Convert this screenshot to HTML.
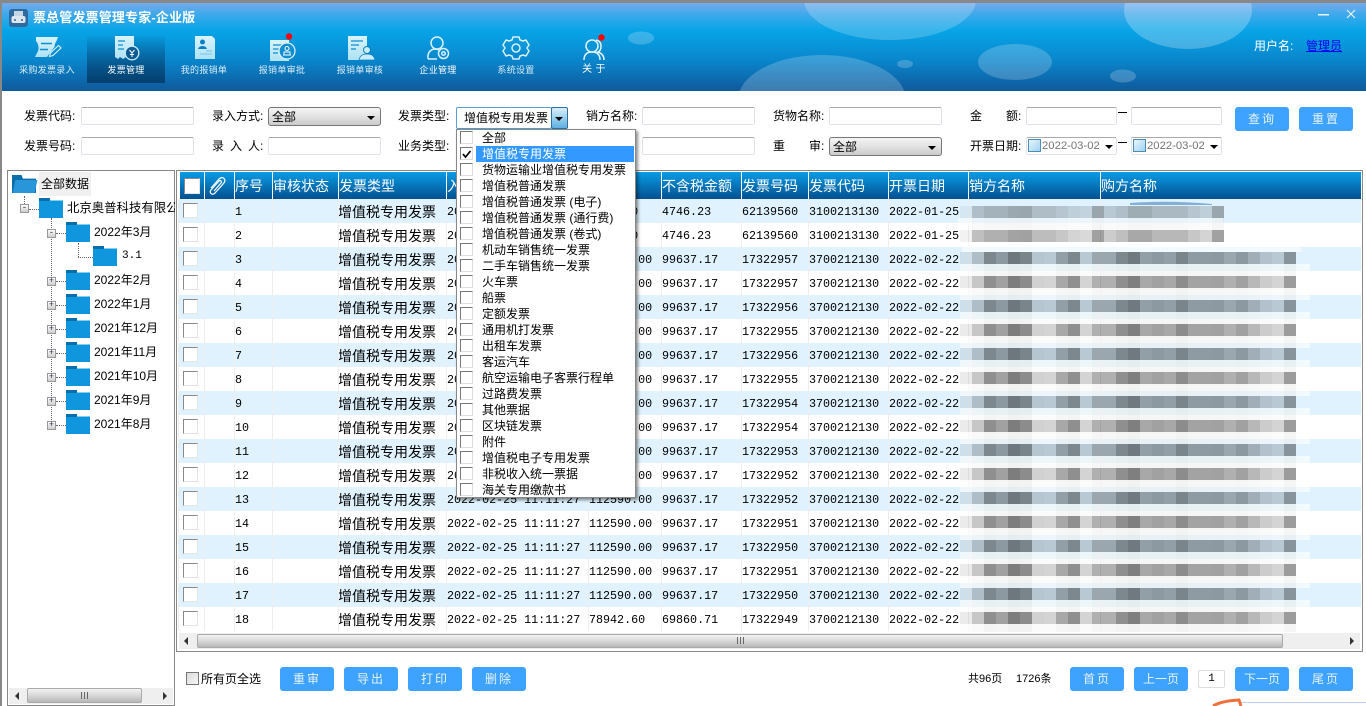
<!DOCTYPE html>
<html lang="zh"><head><meta charset="utf-8"><title>票总管发票管理专家-企业版</title>
<style>
*{box-sizing:border-box}
html,body{margin:0;padding:0;width:1366px;height:706px;overflow:hidden;background:#fff}
body{position:relative;font-family:"Liberation Sans","WenQuanYi Zen Hei","Noto Sans CJK SC",sans-serif;font-size:12px;color:#000}
.a{position:absolute}
.l{position:absolute;font-size:12px;line-height:16px;white-space:nowrap}
.i{position:absolute;height:18px;background:#fff;border:1px solid #dfe3ea;border-top-color:#aaa;border-radius:2px}
.b{position:absolute;height:24px;width:54px;background:#3ea2ff;border-radius:3px;color:#e6f3ff;text-align:center;line-height:24px;font-size:12px;letter-spacing:2px}
.s{position:absolute;height:19px;border:1px solid #777;border-radius:3px;background:linear-gradient(#f4f4f4,#e4e4e4 45%,#cbcbcb);line-height:18px;padding-left:3px;font-size:12px}
.t{position:absolute;width:0;height:0;border-left:4px solid transparent;border-right:4px solid transparent;border-top:4px solid #000}
.n{position:absolute;top:64px;width:78px;text-align:center;font-size:9px;letter-spacing:.3px;line-height:12px;color:#d9edf7;white-space:nowrap}
table{position:absolute;left:178px;top:172px;width:1182px;border-collapse:collapse;table-layout:fixed}
th{height:27px;padding:0;background:linear-gradient(#0a9ce6,#02508f);color:#fff;font-weight:normal;font-size:14px;text-align:left;border-left:1px solid #fff;overflow:hidden;white-space:nowrap}
td{height:24px;padding:2px 0 0 0;border-left:1px solid #eee;font:11.7px/22px "Liberation Mono",monospace;overflow:hidden;white-space:nowrap}
td.z{font:14px/22px "WenQuanYi Zen Hei","Noto Sans CJK SC",sans-serif;text-indent:-1px}
tr:nth-child(odd) td{background:#dff2fe}
tr:nth-child(even) td{background:#fff}
.k{display:block;width:15px;height:15px;margin:-3px 0 0 4px;background:#fff;border:1px solid;border-color:#888 #e4e4e4 #e4e4e4 #888}
.d{position:absolute;left:482px;font-size:12px;line-height:16px;white-space:nowrap}
.c{position:absolute;left:460px;width:13px;height:13px;background:#fff;border:1px solid;border-color:#777 #ddd #ddd #777}
.e{position:absolute;width:9px;height:9px;background:linear-gradient(#fff,#ccc);border:1px solid #999;color:#335;font:9px/7px "Liberation Mono",monospace;text-align:center}
.f{position:absolute;width:24px;height:18px;background:#1096dc;border-top:1px solid #7fd0f5}
.f:before{content:"";position:absolute;left:0;top:-3px;width:11px;height:3px;background:#0b6ea8}
.h{position:absolute;border-top:1px dotted #666}
.v{position:absolute;border-left:1px dotted #666}
.o{position:absolute;font-size:12px;line-height:16px;white-space:nowrap}
.sb{position:absolute;background:#efefef}
.th{position:absolute;background:linear-gradient(#f2f2f2,#d8d8d8 50%,#b8b8b8);border:1px solid #aaa;border-radius:2px}
.gr{position:absolute;width:8px;height:7px;background:repeating-linear-gradient(90deg,#666 0 1px,transparent 1px 3px)}
</style></head><body>

<!-- header -->
<div class="a" style="left:0;top:0;width:1366px;height:91px;background:linear-gradient(#72abec 4px,#3fa9ea 14px,#07a5e8 30px,#0a86cc 60px,#0f5a9c 91px);overflow:hidden">
<svg width="1366" height="91" style="position:absolute;left:0;top:0"><g fill="#fff">
<ellipse cx="890" cy="0" rx="86" ry="40" opacity=".2"/>
<ellipse cx="822" cy="100" rx="84" ry="45" opacity=".2"/>
<ellipse cx="641" cy="38" rx="13" ry="6.5" opacity=".2"/>
<ellipse cx="905" cy="64" rx="8" ry="4" opacity=".2"/>
<ellipse cx="1188" cy="10" rx="64" ry="39" opacity=".25"/>
<ellipse cx="1015" cy="62" rx="37" ry="18" opacity=".2"/>
<ellipse cx="1123" cy="76" rx="13" ry="6.5" opacity=".2"/></g>
<rect x="1318" y="14" width="11" height="1.5" fill="#e8f4fb"/>
<path d="M1347 10l8 8M1355 10l-8 8" stroke="#e8f4fb" stroke-width="1.2"/>
</svg>
</div>
<div class="a" style="left:0;top:0;width:1366px;height:3px;background:#888"></div>
<div class="a" style="left:0;top:3px;width:2px;height:703px;background:#888"></div>
<div class="a" style="left:87px;top:34px;width:78px;height:49px;background:linear-gradient(rgba(2,60,110,0),#02416f)"></div>

<svg class="a" style="left:0;top:0" width="1366" height="91">
<defs><linearGradient id="g" x1="0" y1="0" x2="0" y2="1"><stop offset="0" stop-color="#d9f3fb"/><stop offset="1" stop-color="#aee2f5"/></linearGradient></defs>
<!-- app logo -->
<rect x="9" y="9" width="19" height="18" rx="3" fill="#2e6a9e"/>
<path d="M14 11h9v5h-9z" fill="#c7d6e4"/><rect x="11.500" y="16" width="14" height="7" rx="2" fill="#dbe6ef"/><circle cx="15" cy="20" r="1" fill="#2e6a9e"/><circle cx="22" cy="20" r="1" fill="#2e6a9e"/>
<!-- 1 ticket -->
<path d="M36 37H58L56.500 41Q54.500 44 54.500 47L47 57H35L37 53Q39 50 38.500 47Q38 43 36 41Z" fill="url(#g)"/>
<path d="M41 43.500h11M40 49.500h8" stroke="#0b8fd3" stroke-width="1.500"/>
<path d="M49.500 56.500l1-3.500 8-7.500 2.500 2.500-8 7.500z" fill="#0a90d6" stroke="#d9f3fb" stroke-width="1.100"/>
<!-- 2 receipt -->
<path d="M115 36h19v14h-5v9l-3-2-3 2-3-2-2 2-3-2z" fill="url(#g)"/>
<path d="M118 41h7M118 45h5M118 49h6" stroke="#0b8fd3" stroke-width="1.300"/>
<circle cx="132" cy="53" r="6.800" fill="#0b5c93" stroke="#c9edf8" stroke-width="1.300"/>
<path d="M129.500 50l2.500 3 2.500-3M132 53v4M130 54.500h4" stroke="#fff" stroke-width="1" fill="none"/>
<!-- 3 doc person -->
<path d="M195 36h17l3 3v20h-20z" fill="url(#g)"/>
<circle cx="202.500" cy="42" r="2.500" fill="#0b7fc4"/><path d="M198 49q1-3 4.500-3t4.500 3z" fill="#0b7fc4"/>
<path d="M206 51h6M200 54h12" stroke="#7ecdee" stroke-width="1.200"/>
<!-- 4 doc stamp -->
<path d="M270 40h19v21h-19z" fill="url(#g)"/>
<path d="M273 45h13M273 49h7M273 53h5" stroke="#0b8fd3" stroke-width="1.300"/>
<circle cx="287" cy="51" r="8" fill="#0f8ed2" stroke="#d4f0fa" stroke-width="1.300"/>
<circle cx="287" cy="48.500" r="2" fill="none" stroke="#fff"/><path d="M283 55h8M284 52h6v3h-6z" stroke="#fff" fill="none" stroke-width=".9"/>
<circle cx="289" cy="36.500" r="3.200" fill="#f00"/>
<!-- 5 doc person -->
<path d="M348 36h19v24h-19z" fill="url(#g)"/>
<path d="M351 41h12M351 45h8M351 49h5" stroke="#0b8fd3" stroke-width="1.300"/>
<circle cx="367" cy="50" r="3.500" fill="#c9edf8" stroke="#0b7fc4"/><path d="M359 60q1-6 8-6t8 6z" fill="#c9edf8" stroke="#0b7fc4" stroke-width=".7"/>
<!-- 6 person gear -->
<g fill="none" stroke="#d8f1fb" stroke-width="1.500"><circle cx="437" cy="43" r="6"/><path d="M428 59q-1-8 6-10 3 0 5 1M428 59h9"/><circle cx="443.500" cy="53.500" r="5"/><circle cx="443.500" cy="53.500" r="1.800"/></g>
<!-- 7 gear -->
<g fill="none" stroke="#d8f1fb" stroke-width="1.500"><circle cx="516" cy="48" r="4"/><path d="M513 37h6l1 3 3 1 3-1 3 5-2 3 2 3-3 5-3-1-3 1-1 3h-6l-1-3-3-1-3 1-3-5 2-3-2-3 3-5 3 1 3-1z" stroke-linejoin="round"/></g>
<!-- 8 persons -->
<g fill="none" stroke="#e0f4fc" stroke-width="1.500"><circle cx="592" cy="46" r="6"/><path d="M584 60q0-8 8-8t8 8M596 40q5 1 5 6t-3 6q6 2 6 8"/></g>
<circle cx="601.500" cy="37.500" r="3.200" fill="#f00"/>
</svg>

<div class="l" style="left:33px;top:10px;font-size:13px;font-weight:bold;color:#fff;letter-spacing:.15px">票总管发票管理专家-企业版</div>
<div class="n" style="left:8px">采购发票录入</div>
<div class="n" style="left:87px;color:#fff">发票管理</div>
<div class="n" style="left:165px">我的报销单</div>
<div class="n" style="left:243px">报销单审批</div>
<div class="n" style="left:321px">报销单审核</div>
<div class="n" style="left:399px;color:#fff">企业管理</div>
<div class="n" style="left:477px">系统设置</div>
<div class="n" style="left:555px;font-size:10px;top:64px;color:#fff">关 于</div>
<div class="l" style="left:1254px;top:38px;color:#fff">用户名:</div>
<div class="l" style="left:1306px;top:38px;color:#00e;text-decoration:underline">管理员</div>

<!-- filters -->
<div class="l" style="left:24px;top:108px">发票代码:</div><div class="i" style="left:81px;top:107px;width:113px"></div>
<div class="l" style="left:212px;top:108px">录入方式:</div><div class="s" style="left:268px;top:107px;width:113px">全部<span class="t" style="right:5px;top:8px"></span></div>
<div class="l" style="left:398px;top:108px">发票类型:</div>
<div class="a" style="left:456px;top:107px;width:96px;height:22px;background:#fff;border:1px solid #5a9fd0;border-radius:2px;line-height:20px;padding-left:7px;white-space:nowrap;overflow:hidden">增值税专用发票</div>
<div class="a" style="left:551px;top:107px;width:17px;height:22px;background:linear-gradient(#d8eefa,#5db0e2);border:1px solid #2f6f9e;border-radius:2px"><span class="t" style="left:3px;top:9px"></span></div>
<div class="l" style="left:586px;top:108px">销方名称:</div><div class="i" style="left:642px;top:107px;width:113px"></div>
<div class="l" style="left:773px;top:108px">货物名称:</div><div class="i" style="left:829px;top:107px;width:113px"></div>
<div class="l" style="left:970px;top:108px">金</div><div class="l" style="left:1006px;top:108px">额:</div>
<div class="i" style="left:1026px;top:107px;width:91px"></div><div class="a" style="left:1118px;top:112px;width:9px;height:1px;background:#000"></div><div class="i" style="left:1131px;top:107px;width:91px"></div>
<div class="b" style="left:1235px;top:107px">查询</div><div class="b" style="left:1299px;top:107px">重置</div>

<div class="l" style="left:24px;top:138px">发票号码:</div><div class="i" style="left:81px;top:137px;width:113px"></div>
<div class="l" style="left:212px;top:138px">录</div><div class="l" style="left:230px;top:138px">入</div><div class="l" style="left:248px;top:138px">人:</div><div class="i" style="left:268px;top:137px;width:113px"></div>
<div class="l" style="left:398px;top:138px">业务类型:</div><div class="i" style="left:642px;top:137px;width:113px"></div>
<div class="l" style="left:773px;top:138px">重</div><div class="l" style="left:809px;top:138px">审:</div><div class="s" style="left:829px;top:137px;width:113px">全部<span class="t" style="right:5px;top:8px"></span></div>
<div class="l" style="left:970px;top:138px">开票日期:</div>
<div class="i" style="left:1026px;top:137px;width:91px"></div><div class="a" style="left:1028px;top:139px;width:13px;height:13px;background:linear-gradient(135deg,#e6f5fd,#9fd3f0);border:1px solid #4e8bb0"></div><div class="a" style="left:1042px;top:138px;width:57px;overflow:hidden;font:11.3px/16px 'Liberation Sans',sans-serif;color:#777;white-space:nowrap">2022-03-02</div><span class="t" style="left:1105px;top:145px"></span>
<div class="a" style="left:1118px;top:142px;width:9px;height:1px;background:#000"></div>
<div class="i" style="left:1131px;top:137px;width:91px"></div><div class="a" style="left:1133px;top:139px;width:13px;height:13px;background:linear-gradient(135deg,#e6f5fd,#9fd3f0);border:1px solid #4e8bb0"></div><div class="a" style="left:1147px;top:138px;width:57px;overflow:hidden;font:11.3px/16px 'Liberation Sans',sans-serif;color:#777;white-space:nowrap">2022-03-02</div><span class="t" style="left:1210px;top:145px"></span>

<!-- tree box -->
<div class="a" style="left:7px;top:170px;width:168px;height:536px;border:1px solid #888"></div>
<div class="a" style="left:12px;top:175px;width:24px;height:18px;background:#0c6fa8;clip-path:polygon(0 0,40% 0,45% 20%,100% 20%,100% 100%,0 100%)"></div>
<div class="a" style="left:14px;top:180px;width:22px;height:13px;background:#2a96da;transform:skewX(-12deg)"></div>
<div class="a" style="left:39px;top:172px;width:52px;height:24px;background:#f0f0f0;line-height:24px;text-align:center">全部数据</div>
<div class="v" style="left:24px;top:196px;height:12px"></div><div class="h" style="left:29px;top:209px;width:10px"></div>
<div class="e" style="left:20px;top:204px">-</div>
<div class="f" style="left:39px;top:200px"></div>
<div class="o" style="left:67px;top:200px;font-size:12.400px;width:108px;overflow:hidden">北京奥普科技有限公司</div>
<div class="v" style="left:51px;top:218px;height:208px"></div>
<div class="h" style="left:56px;top:233px;width:10px"></div><div class="e" style="left:47px;top:229px">-</div><div class="f" style="left:66px;top:224px"></div><div class="o" style="left:94px;top:224px">2022年3月</div>
<div class="v" style="left:78px;top:243px;height:14px"></div><div class="h" style="left:78px;top:257px;width:15px"></div><div class="f" style="left:93px;top:248px"></div><div class="o" style="left:122px;top:248px;font-family:'Liberation Mono',monospace;font-size:11px">3.1</div>
<div class="h" style="left:56px;top:281px;width:10px"></div><div class="e" style="left:47px;top:277px">+</div><div class="f" style="left:66px;top:272px"></div><div class="o" style="left:94px;top:272px">2022年2月</div>
<div class="h" style="left:56px;top:305px;width:10px"></div><div class="e" style="left:47px;top:301px">+</div><div class="f" style="left:66px;top:296px"></div><div class="o" style="left:94px;top:296px">2022年1月</div>
<div class="h" style="left:56px;top:329px;width:10px"></div><div class="e" style="left:47px;top:325px">+</div><div class="f" style="left:66px;top:320px"></div><div class="o" style="left:94px;top:320px">2021年12月</div>
<div class="h" style="left:56px;top:353px;width:10px"></div><div class="e" style="left:47px;top:349px">+</div><div class="f" style="left:66px;top:344px"></div><div class="o" style="left:94px;top:344px">2021年11月</div>
<div class="h" style="left:56px;top:377px;width:10px"></div><div class="e" style="left:47px;top:373px">+</div><div class="f" style="left:66px;top:368px"></div><div class="o" style="left:94px;top:368px">2021年10月</div>
<div class="h" style="left:56px;top:401px;width:10px"></div><div class="e" style="left:47px;top:397px">+</div><div class="f" style="left:66px;top:392px"></div><div class="o" style="left:94px;top:392px">2021年9月</div>
<div class="h" style="left:56px;top:425px;width:10px"></div><div class="e" style="left:47px;top:421px">+</div><div class="f" style="left:66px;top:416px"></div><div class="o" style="left:94px;top:416px">2021年8月</div>
<div class="sb" style="left:9px;top:688px;width:164px;height:16px"></div>
<div class="th" style="left:27px;top:688px;width:115px;height:15px"></div>
<div class="gr" style="left:81px;top:692px"></div>
<span class="a" style="left:15px;top:692px;border:4px solid transparent;border-right-color:#333;border-left:0"></span>
<span class="a" style="left:163px;top:692px;border:4px solid transparent;border-left-color:#333;border-right:0"></span>

<!-- table box -->
<div class="a" style="left:176px;top:170px;width:1187px;height:482px;border:1px solid #888"></div>
<table><colgroup><col style="width:26px"><col style="width:30px"><col style="width:38px"><col style="width:66px"><col style="width:108px"><col style="width:142px"><col style="width:73px"><col style="width:80px"><col style="width:67px"><col style="width:80px"><col style="width:80px"><col style="width:132px"><col style="width:260px"></colgroup>
<thead><tr><th><i class="k" style="width:16px;height:16px;margin:0 0 0 5px"></i></th><th></th><th>序号</th><th>审核状态</th><th>发票类型</th><th>入账日期</th><th>税额</th><th>不含税金额</th><th>发票号码</th><th>发票代码</th><th>开票日期</th><th>销方名称</th><th>购方名称</th></tr></thead>
<tbody>
<tr><td><i class="k"></i></td><td></td><td>1</td><td></td><td class="z">增值税专用发票</td><td>2022-02-25 11:11:27</td><td>5363.30</td><td>4746.23</td><td>62139560</td><td>3100213130</td><td>2022-01-25</td><td></td><td></td></tr>
<tr><td><i class="k"></i></td><td></td><td>2</td><td></td><td class="z">增值税专用发票</td><td>2022-02-25 11:11:27</td><td>5363.30</td><td>4746.23</td><td>62139560</td><td>3100213130</td><td>2022-01-25</td><td></td><td></td></tr>
<tr><td><i class="k"></i></td><td></td><td>3</td><td></td><td class="z">增值税专用发票</td><td>2022-02-25 11:11:27</td><td>112590.00</td><td>99637.17</td><td>17322957</td><td>3700212130</td><td>2022-02-22</td><td></td><td></td></tr>
<tr><td><i class="k"></i></td><td></td><td>4</td><td></td><td class="z">增值税专用发票</td><td>2022-02-25 11:11:27</td><td>112590.00</td><td>99637.17</td><td>17322957</td><td>3700212130</td><td>2022-02-22</td><td></td><td></td></tr>
<tr><td><i class="k"></i></td><td></td><td>5</td><td></td><td class="z">增值税专用发票</td><td>2022-02-25 11:11:27</td><td>112590.00</td><td>99637.17</td><td>17322956</td><td>3700212130</td><td>2022-02-22</td><td></td><td></td></tr>
<tr><td><i class="k"></i></td><td></td><td>6</td><td></td><td class="z">增值税专用发票</td><td>2022-02-25 11:11:27</td><td>112590.00</td><td>99637.17</td><td>17322955</td><td>3700212130</td><td>2022-02-22</td><td></td><td></td></tr>
<tr><td><i class="k"></i></td><td></td><td>7</td><td></td><td class="z">增值税专用发票</td><td>2022-02-25 11:11:27</td><td>112590.00</td><td>99637.17</td><td>17322956</td><td>3700212130</td><td>2022-02-22</td><td></td><td></td></tr>
<tr><td><i class="k"></i></td><td></td><td>8</td><td></td><td class="z">增值税专用发票</td><td>2022-02-25 11:11:27</td><td>112590.00</td><td>99637.17</td><td>17322955</td><td>3700212130</td><td>2022-02-22</td><td></td><td></td></tr>
<tr><td><i class="k"></i></td><td></td><td>9</td><td></td><td class="z">增值税专用发票</td><td>2022-02-25 11:11:27</td><td>112590.00</td><td>99637.17</td><td>17322954</td><td>3700212130</td><td>2022-02-22</td><td></td><td></td></tr>
<tr><td><i class="k"></i></td><td></td><td>10</td><td></td><td class="z">增值税专用发票</td><td>2022-02-25 11:11:27</td><td>112590.00</td><td>99637.17</td><td>17322954</td><td>3700212130</td><td>2022-02-22</td><td></td><td></td></tr>
<tr><td><i class="k"></i></td><td></td><td>11</td><td></td><td class="z">增值税专用发票</td><td>2022-02-25 11:11:27</td><td>112590.00</td><td>99637.17</td><td>17322953</td><td>3700212130</td><td>2022-02-22</td><td></td><td></td></tr>
<tr><td><i class="k"></i></td><td></td><td>12</td><td></td><td class="z">增值税专用发票</td><td>2022-02-25 11:11:27</td><td>112590.00</td><td>99637.17</td><td>17322952</td><td>3700212130</td><td>2022-02-22</td><td></td><td></td></tr>
<tr><td><i class="k"></i></td><td></td><td>13</td><td></td><td class="z">增值税专用发票</td><td>2022-02-25 11:11:27</td><td>112590.00</td><td>99637.17</td><td>17322952</td><td>3700212130</td><td>2022-02-22</td><td></td><td></td></tr>
<tr><td><i class="k"></i></td><td></td><td>14</td><td></td><td class="z">增值税专用发票</td><td>2022-02-25 11:11:27</td><td>112590.00</td><td>99637.17</td><td>17322951</td><td>3700212130</td><td>2022-02-22</td><td></td><td></td></tr>
<tr><td><i class="k"></i></td><td></td><td>15</td><td></td><td class="z">增值税专用发票</td><td>2022-02-25 11:11:27</td><td>112590.00</td><td>99637.17</td><td>17322950</td><td>3700212130</td><td>2022-02-22</td><td></td><td></td></tr>
<tr><td><i class="k"></i></td><td></td><td>16</td><td></td><td class="z">增值税专用发票</td><td>2022-02-25 11:11:27</td><td>112590.00</td><td>99637.17</td><td>17322951</td><td>3700212130</td><td>2022-02-22</td><td></td><td></td></tr>
<tr><td><i class="k"></i></td><td></td><td>17</td><td></td><td class="z">增值税专用发票</td><td>2022-02-25 11:11:27</td><td>112590.00</td><td>99637.17</td><td>17322950</td><td>3700212130</td><td>2022-02-22</td><td></td><td></td></tr>
<tr><td><i class="k"></i></td><td></td><td>18</td><td></td><td class="z">增值税专用发票</td><td>2022-02-25 11:11:27</td><td>78942.60</td><td>69860.71</td><td>17322949</td><td>3700212130</td><td>2022-02-22</td><td></td><td></td></tr>
</tbody></table>
<div class="a" style="left:177px;top:171px;width:3px;height:28px;background:#fff"></div>

<!-- paperclip -->
<svg class="a" style="left:207px;top:175px" width="22" height="22" fill="none" stroke="#fff" stroke-width="1.200"><path d="M4 13l8-9q3-2.500 5 -.5t-.5 5l-9 10q-2 1.500-3.500 0t0-3.500l8-9q1-1 2 0t0 2l-7 8"/></svg>

<!-- pixelated blur -->
<svg class="a" style="left:0;top:0" width="1366" height="706">
<defs>
<g id="p"><rect x="960" width="12" height="12" fill-opacity=".08"/><rect x="972" width="12" height="12" fill-opacity=".22"/><rect x="984" width="12" height="12" fill-opacity=".44"/><rect x="996" width="12" height="12" fill-opacity=".37"/><rect x="1008" width="12" height="12" fill-opacity=".51"/><rect x="1020" width="12" height="12" fill-opacity=".45"/><rect x="1032" width="12" height="12" fill-opacity=".18"/><rect x="1044" width="12" height="12" fill-opacity=".17"/><rect x="1056" width="12" height="12" fill-opacity=".34"/><rect x="1068" width="12" height="12" fill-opacity=".44"/><rect x="1080" width="12" height="12" fill-opacity=".17"/><rect x="1092" width="12" height="12" fill-opacity=".31"/><rect x="1104" width="12" height="12" fill-opacity=".31"/><rect x="1116" width="12" height="12" fill-opacity=".44"/><rect x="1128" width="12" height="12" fill-opacity=".5"/><rect x="1140" width="12" height="12" fill-opacity=".34"/><rect x="1152" width="12" height="12" fill-opacity=".37"/><rect x="1164" width="12" height="12" fill-opacity=".34"/><rect x="1176" width="12" height="12" fill-opacity=".45"/><rect x="1188" width="12" height="12" fill-opacity=".36"/><rect x="1200" width="12" height="12" fill-opacity=".36"/><rect x="1212" width="12" height="12" fill-opacity=".37"/><rect x="1224" width="12" height="12" fill-opacity=".31"/><rect x="1236" width="12" height="12" fill-opacity=".37"/><rect x="1248" width="12" height="12" fill-opacity=".28"/><rect x="1260" width="12" height="12" fill-opacity=".2"/><rect x="1272" width="12" height="12" fill-opacity=".17"/><rect x="1284" width="12" height="12" fill-opacity=".39"/></g>
<g id="q"><rect x="960" width="12" height="12" fill-opacity=".05"/><rect x="972" width="12" height="12" fill-opacity=".25"/><rect x="984" width="12" height="12" fill-opacity=".31"/><rect x="996" width="12" height="12" fill-opacity=".31"/><rect x="1008" width="12" height="12" fill-opacity=".36"/><rect x="1020" width="12" height="12" fill-opacity=".37"/><rect x="1032" width="12" height="12" fill-opacity=".26"/><rect x="1044" width="12" height="12" fill-opacity=".26"/><rect x="1056" width="12" height="12" fill-opacity=".22"/><rect x="1068" width="12" height="12" fill-opacity=".17"/><rect x="1080" width="12" height="12" fill-opacity=".15"/><rect x="1092" width="12" height="12" fill-opacity=".37"/><rect x="1104" width="12" height="12" fill-opacity=".2"/><rect x="1116" width="12" height="12" fill-opacity=".25"/><rect x="1128" width="12" height="12" fill-opacity=".34"/><rect x="1140" width="12" height="12" fill-opacity=".34"/><rect x="1152" width="12" height="12" fill-opacity=".28"/><rect x="1164" width="12" height="12" fill-opacity=".28"/><rect x="1176" width="12" height="12" fill-opacity=".28"/><rect x="1188" width="12" height="12" fill-opacity=".22"/><rect x="1200" width="12" height="12" fill-opacity=".17"/><rect x="1212" width="12" height="12" fill-opacity=".37"/></g>
</defs>
<path d="M1130 203q40-3 82 1v1h-82z" fill="#5b93c4" opacity=".7"/>
<use href="#q" y="206" opacity=".85"/>
<rect x="958" y="218" width="265" height="12" fill="#fff" opacity=".6"/><use href="#q" y="218" opacity=".1"/>
<use href="#q" y="230"/>
<path d="M962 242H1230L1300 247 1302 252H962z" fill="#fff" opacity=".6"/>
<use href="#p" y="252"/><use href="#p" y="276"/><use href="#p" y="300"/><use href="#p" y="324"/><use href="#p" y="348"/><use href="#p" y="372"/><use href="#p" y="396"/><use href="#p" y="420"/><use href="#p" y="444"/><use href="#p" y="468"/><use href="#p" y="492"/><use href="#p" y="516"/><use href="#p" y="540"/><use href="#p" y="564"/><use href="#p" y="588"/><use href="#p" y="612"/>
<g fill="#fff" opacity=".65"><rect x="960" y="264" width="350" height="12"/><rect x="960" y="288" width="350" height="12"/><rect x="960" y="312" width="350" height="12"/><rect x="960" y="336" width="350" height="12"/><rect x="960" y="360" width="350" height="12"/><rect x="960" y="384" width="350" height="12"/><rect x="960" y="408" width="350" height="12"/><rect x="960" y="432" width="350" height="12"/><rect x="960" y="456" width="350" height="12"/><rect x="960" y="480" width="350" height="12"/><rect x="960" y="504" width="350" height="12"/><rect x="960" y="528" width="350" height="12"/><rect x="960" y="552" width="350" height="12"/><rect x="960" y="576" width="350" height="12"/><rect x="960" y="600" width="350" height="12"/><rect x="960" y="624" width="350" height="8"/></g>
<g opacity=".1"><use href="#p" y="264"/><use href="#p" y="288"/><use href="#p" y="312"/><use href="#p" y="336"/><use href="#p" y="360"/><use href="#p" y="384"/><use href="#p" y="408"/><use href="#p" y="432"/><use href="#p" y="456"/><use href="#p" y="480"/><use href="#p" y="504"/><use href="#p" y="528"/><use href="#p" y="552"/><use href="#p" y="576"/><use href="#p" y="600"/><use href="#p" y="624"/></g>
</svg>

<!-- table scrollbar -->
<div class="sb" style="left:177px;top:632px;width:1185px;height:19px;background:#fff"></div>
<div class="sb" style="left:179px;top:633px;width:1181px;height:16px"></div>
<div class="th" style="left:197px;top:634px;width:1086px;height:14px"></div>
<div class="gr" style="left:737px;top:637px"></div>
<span class="a" style="left:184px;top:637px;border:4px solid transparent;border-right-color:#333;border-left:0"></span>
<span class="a" style="left:1350px;top:637px;border:4px solid transparent;border-left-color:#333;border-right:0"></span>

<!-- dropdown -->
<div class="a" style="left:456px;top:129px;width:180px;height:369px;background:#fff;border:1px solid #888;box-shadow:2px 2px 3px rgba(0,0,0,.45)"></div>
<div class="a" style="left:476px;top:146px;width:158px;height:16px;background:#3399ff"></div>
<div class="c" style="top:131px"></div><div class="d" style="top:130px">全部</div>
<div class="c" style="top:147px"></div><div class="d" style="top:146px;color:#fff">增值税专用发票</div>
<svg class="a" style="left:461px;top:149px" width="11" height="10" fill="none" stroke="#000" stroke-width="1.700"><path d="M2 5l2.500 3 5-6"/></svg>
<div class="c" style="top:163px"></div><div class="d" style="top:162px">货物运输业增值税专用发票</div>
<div class="c" style="top:179px"></div><div class="d" style="top:178px">增值税普通发票</div>
<div class="c" style="top:195px"></div><div class="d" style="top:194px">增值税普通发票 (电子)</div>
<div class="c" style="top:211px"></div><div class="d" style="top:210px">增值税普通发票 (通行费)</div>
<div class="c" style="top:227px"></div><div class="d" style="top:226px">增值税普通发票 (卷式)</div>
<div class="c" style="top:243px"></div><div class="d" style="top:242px">机动车销售统一发票</div>
<div class="c" style="top:259px"></div><div class="d" style="top:258px">二手车销售统一发票</div>
<div class="c" style="top:275px"></div><div class="d" style="top:274px">火车票</div>
<div class="c" style="top:291px"></div><div class="d" style="top:290px">船票</div>
<div class="c" style="top:307px"></div><div class="d" style="top:306px">定额发票</div>
<div class="c" style="top:323px"></div><div class="d" style="top:322px">通用机打发票</div>
<div class="c" style="top:339px"></div><div class="d" style="top:338px">出租车发票</div>
<div class="c" style="top:355px"></div><div class="d" style="top:354px">客运汽车</div>
<div class="c" style="top:371px"></div><div class="d" style="top:370px">航空运输电子客票行程单</div>
<div class="c" style="top:387px"></div><div class="d" style="top:386px">过路费发票</div>
<div class="c" style="top:403px"></div><div class="d" style="top:402px">其他票据</div>
<div class="c" style="top:419px"></div><div class="d" style="top:418px">区块链发票</div>
<div class="c" style="top:435px"></div><div class="d" style="top:434px">附件</div>
<div class="c" style="top:451px"></div><div class="d" style="top:450px">增值税电子专用发票</div>
<div class="c" style="top:467px"></div><div class="d" style="top:466px">非税收入统一票据</div>
<div class="c" style="top:483px"></div><div class="d" style="top:482px">海关专用缴款书</div>

<!-- bottom bar -->
<div class="a" style="left:186px;top:672px;width:13px;height:13px;background:linear-gradient(135deg,#ddd,#f4f4f4);border:1px solid #777"></div>
<div class="l" style="left:201px;top:671px">所有页全选</div>
<div class="b" style="left:280px;top:667px">重审</div><div class="b" style="left:344px;top:667px">导出</div><div class="b" style="left:408px;top:667px">打印</div><div class="b" style="left:472px;top:667px">删除</div>
<div class="l" style="left:968px;top:671px;font-size:11px">共96页</div><div class="l" style="left:1016px;top:671px;font-size:11px">1726条</div>
<div class="b" style="left:1070px;top:667px">首页</div><div class="b" style="left:1134px;top:667px;letter-spacing:0">上一页</div>
<div class="i" style="left:1198px;top:670px;width:27px;height:18px;text-align:center;font:11px/16px 'Liberation Mono',monospace;border-color:#ddd">1</div>
<div class="b" style="left:1235px;top:667px;letter-spacing:0">下一页</div><div class="b" style="left:1299px;top:667px">尾页</div>
<div class="a" style="left:1240px;top:702px;width:126px;height:1px;background:#b9d2ee"></div>
<svg class="a" style="left:1205px;top:696px" width="40" height="10"><path d="M8 10q8-5 26-6l2 6" fill="none" stroke="#f0703a" stroke-width="3"/></svg>
</body></html>
